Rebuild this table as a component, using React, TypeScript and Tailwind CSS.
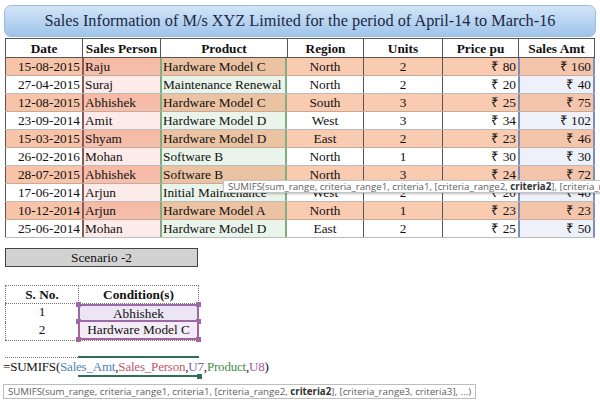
import React from "react";

type Row = [string, string, string, string, string, string, string];

const rows: Row[] = [
  ["15-08-2015", "Raju", "Hardware Model C", "North", "2", "₹ 80", "₹ 160"],
  ["27-04-2015", "Suraj", "Maintenance Renewal", "North", "2", "₹ 20", "₹ 40"],
  ["12-08-2015", "Abhishek", "Hardware Model C", "South", "3", "₹ 25", "₹ 75"],
  ["23-09-2014", "Amit", "Hardware Model D", "West", "3", "₹ 34", "₹ 102"],
  ["15-03-2015", "Shyam", "Hardware Model D", "East", "2", "₹ 23", "₹ 46"],
  ["26-02-2016", "Mohan", "Software B", "North", "1", "₹ 30", "₹ 30"],
  ["28-07-2015", "Abhishek", "Software B", "North", "3", "₹ 24", "₹ 72"],
  ["17-06-2014", "Arjun", "Initial Maintenance", "West", "2", "₹ 20", "₹ 40"],
  ["10-12-2014", "Arjun", "Hardware Model A", "North", "1", "₹ 23", "₹ 23"],
  ["25-06-2014", "Mohan", "Hardware Model D", "East", "2", "₹ 25", "₹ 50"],
];

const serif = "font-['Liberation_Serif','Times_New_Roman',serif]";
const sans = "font-['Open_Sans','Noto_Sans',sans-serif]";

function Tip() {
  return (
    <span className="whitespace-nowrap">
      SUMIFS(sum_range, criteria_range1, criteria1, [criteria_range2,{" "}
      <b className="font-bold text-[#333]">criteria2</b>], [criteria_range3, criteria3], ...)
    </span>
  );
}

export default function App() {
  return (
    <div className={`relative w-[600px] h-[403px] overflow-hidden bg-white text-[#111] ${serif}`}>
      {/* Title */}
      <div className="mx-[4px] mt-[5px] h-[32px] w-[592px] rounded-[7px] border border-[#9dbde0] bg-gradient-to-b from-[#d3e5f7] to-[#9ec4ea] flex items-center justify-center text-[16.3px] text-[#1c2846] whitespace-nowrap">
        Sales Information of M/s XYZ Limited for the period of April-14 to March-16
      </div>

      {/* Main table */}
      <div className="ml-[5px] mt-[1px] w-[590px] text-[13.3px] whitespace-nowrap">
        <div className="flex h-[20px] border-y border-[#555] bg-white font-bold">
          <div className="w-[77px] border-l border-[#555] text-center leading-[19px]">Date</div>
          <div className="w-[78px] border-l border-[#555] text-center leading-[19px]">Sales Person</div>
          <div className="w-[127px] border-l border-[#555] text-center leading-[19px]">Product</div>
          <div className="w-[76px] border-l border-[#555] text-center leading-[19px]">Region</div>
          <div className="w-[79px] border-l border-[#555] text-center leading-[19px]">Units</div>
          <div className="w-[76px] border-l border-[#555] text-center leading-[19px]">Price pu</div>
          <div className="w-[77px] border-x border-[#555] text-center leading-[19px]">Sales Amt</div>
        </div>
        {rows.map((r, i) => {
          const odd = i % 2 === 0;
          return (
            <div key={i} className={`flex h-[18px] leading-[17px] border-b ${odd ? "border-[#c9a896]" : "border-[#bbbbbb]"}`}>
              <div className={`w-[77px] border-l border-[#555] text-right pr-[2px] ${odd ? "bg-[#f8c4a9]" : "bg-white"}`}>{r[0]}</div>
              <div className={`w-[78px] border-l-2 border-[#8a5a5a] pl-[1px] overflow-hidden ${odd ? "bg-gradient-to-b from-[#f6b9a4] to-[#f4c0ae]" : "bg-[#fdebea]"}`}>{r[1]}</div>
              <div className={`w-[127px] border-x-2 border-[#7fae80] pl-[1px] overflow-hidden ${odd ? "bg-[#ebc3a3]" : "bg-[#e9f4ea]"}`}>{r[2]}</div>
              <div className={`w-[76px] text-center ${odd ? "bg-[#f9cbb1]" : "bg-white"}`}>{r[3]}</div>
              <div className={`w-[79px] border-l border-[#555] text-center ${odd ? "bg-[#f9cbb1]" : "bg-white"}`}>{r[4]}</div>
              <div className={`w-[76px] border-l border-[#555] text-right pr-[2px] ${odd ? "bg-[#f9cbb1]" : "bg-white"}`}>{r[5]}</div>
              <div className={`w-[77px] border-x-2 border-[#7d8fb8] text-right pr-[2px] ${odd ? "bg-[#f5c5ab]" : "bg-[#eef0fa]"}`}>{r[6]}</div>
            </div>
          );
        })}
      </div>

      {/* Scenario box */}
      <div className="ml-[5px] mt-[10px] h-[19px] w-[193px] border border-[#444] bg-[#d2d2d2] text-center text-[13.3px] leading-[17px]">
        Scenario -2
      </div>

      {/* Condition table */}
      <div className="ml-[5px] mt-[18px] w-[194px] text-[13.3px] whitespace-nowrap">
        <div className="flex h-[18px] leading-[17px] border-t border-dotted border-[#777] font-bold">
          <div className="w-[73px] border-l border-dotted border-[#777] text-center">S. No.</div>
          <div className="w-[121px] border-x border-dotted border-[#777] text-center">Condition(s)</div>
        </div>
        <div className="flex h-[19px] leading-[16px] border-t border-dotted border-[#777]">
          <div className="w-[73px] border-l border-dotted border-[#777] text-center">1</div>
          <div className="relative w-[121px] border-2 border-[#9b6aa6] bg-[#ece5f4] text-center">
            Abhishek
            <span className="absolute left-[-4px] top-[-4px] h-[5px] w-[5px] bg-[#9b6aa6]" />
            <span className="absolute right-[-4px] top-[-4px] h-[5px] w-[5px] bg-[#9b6aa6]" />
            <span className="absolute left-[-4px] bottom-[-4px] h-[5px] w-[5px] bg-[#9b6aa6]" />
            <span className="absolute right-[-4px] bottom-[-4px] h-[5px] w-[5px] bg-[#9b6aa6]" />
          </div>
        </div>
        <div className="flex h-[19px] leading-[15px] border-b border-dotted border-[#777]">
          <div className="w-[73px] border-l border-dotted border-[#777] text-center">2</div>
          <div className="relative w-[121px] border-2 border-t-0 border-[#a4639e] bg-[#f3ebf5] text-center">
            Hardware Model C
            <span className="absolute left-[-4px] bottom-[-4px] h-[5px] w-[5px] bg-[#a4639e]" />
            <span className="absolute right-[-4px] bottom-[-4px] h-[5px] w-[5px] bg-[#a4639e]" />
          </div>
        </div>
      </div>

      {/* Formula line */}
      <div className="relative mt-[16px] h-[21px]">
        <div className="absolute left-[5px] top-0 w-[73px] border-t border-dotted border-[#777]" />
        <div className="absolute left-[78px] top-[-1px] w-[121px] h-[21px] border-y-2 border-[#2f6f55]" />
        <span className="absolute left-[197px] top-[17px] h-[5px] w-[5px] bg-[#2f6f55]" />
        <div className="absolute left-[3px] top-[1px] whitespace-nowrap text-[13px] leading-[18px] tracking-[-0.2px]">
          <span>=SUMIFS(</span>
          <span className="text-[#4f84b8]">Sales_Amt</span>
          <span>,</span>
          <span className="text-[#c2576b]">Sales_Person</span>
          <span>,</span>
          <span className="text-[#7a60a6]">U7</span>
          <span>,</span>
          <span className="text-[#3f8f46]">Product</span>
          <span>,</span>
          <span className="text-[#a0559c]">U8</span>
          <span>)</span>
        </div>
      </div>

      {/* Bottom tooltip */}
      <div className={`ml-[3px] mt-[4px] inline-block h-[15px] border border-[#bdbdbd] bg-white px-[4px] text-[9.7px] leading-[13px] text-[#606060] ${sans}`}>
        <Tip />
      </div>

      {/* Top tooltip overlay */}
      <div className={`absolute left-[223px] top-[180px] h-[13px] border border-[#c4c4c4] bg-white pl-[4px] pr-[4px] text-[9.7px] leading-[11px] text-[#606060] shadow-[1px_1px_2px_rgba(0,0,0,0.25)] ${sans}`}>
        <Tip />
      </div>
    </div>
  );
}
